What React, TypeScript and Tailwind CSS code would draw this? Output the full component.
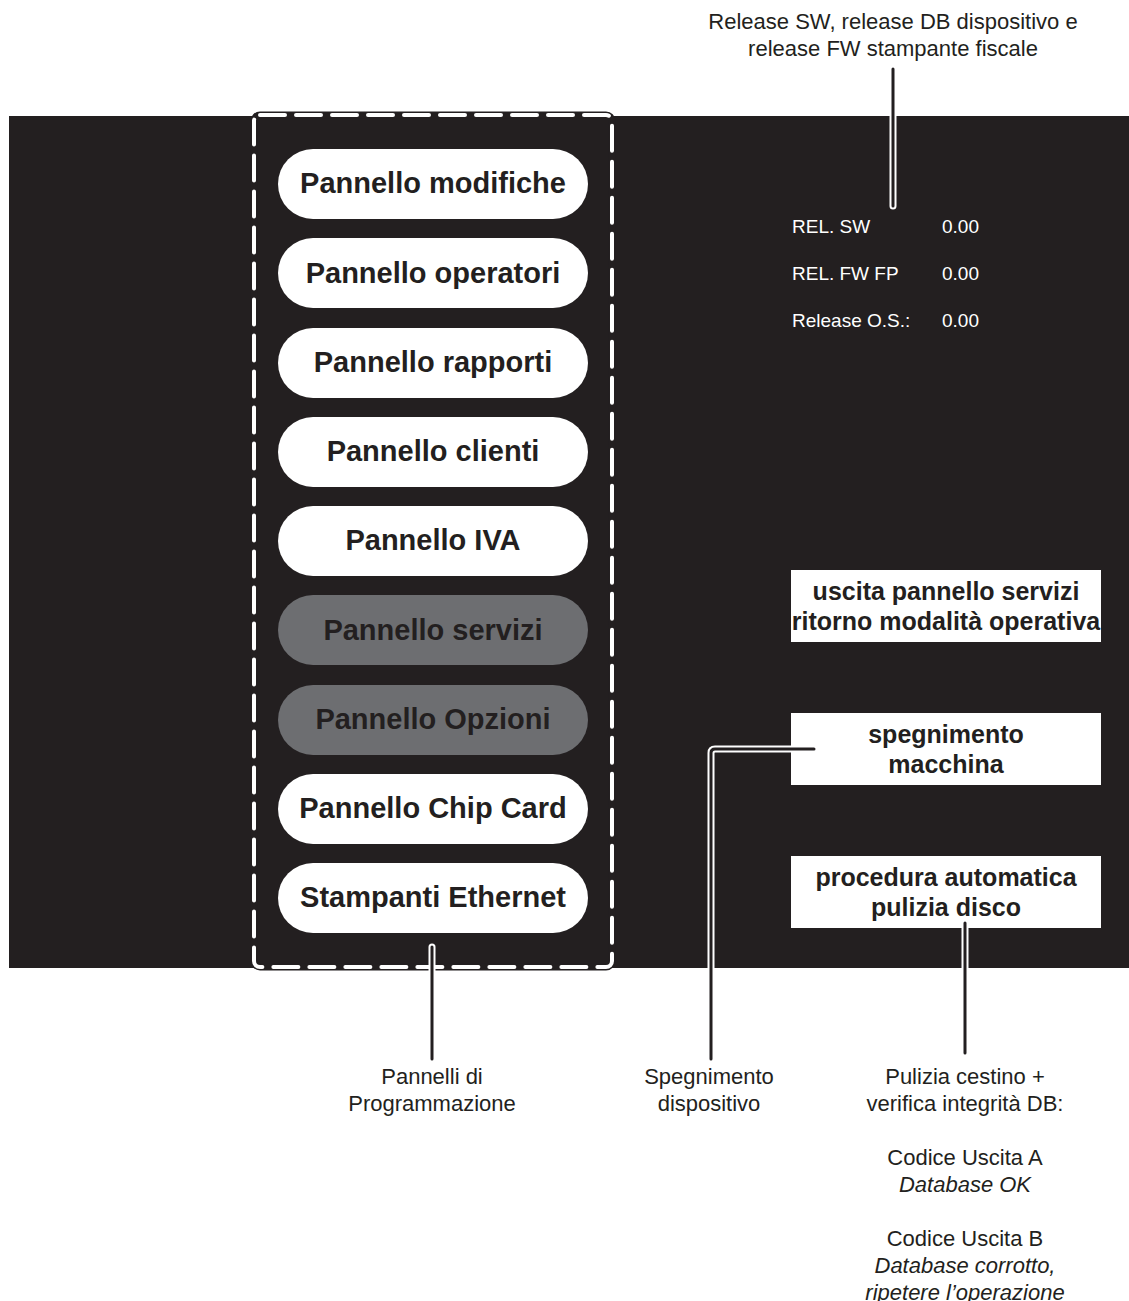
const PANELS = [
  { label: "Pannello modifiche", active: true },
  { label: "Pannello operatori", active: true },
  { label: "Pannello rapporti", active: true },
  { label: "Pannello clienti", active: true },
  { label: "Pannello IVA", active: true },
  { label: "Pannello servizi", active: false },
  { label: "Pannello Opzioni", active: false },
  { label: "Pannello Chip Card", active: true },
  { label: "Stampanti Ethernet", active: true },
]

const RELEASES = [
  { name: "REL. SW", value: "0.00" },
  { name: "REL. FW FP", value: "0.00" },
  { name: "Release O.S.:", value: "0.00" },
]

const ACTIONS = [
  ["uscita pannello servizi", "ritorno modalità operativa"],
  ["spegnimento", "macchina"],
  ["procedura automatica", "pulizia disco"],
]

// callout lines: dark core with a thin white halo
function Callout({ d }: { d: string }) {
  return (
    <g fill="none" strokeLinecap="round" strokeLinejoin="round">
      <path d={d} stroke="#ffffff" strokeWidth={7} />
      <path d={d} stroke="#231f20" strokeWidth={3} />
    </g>
  )
}

export default function App() {
  return (
    <div className="relative w-[1129px] h-[1301px] bg-white text-[#231f20] font-['Liberation_Sans',Arial,sans-serif] overflow-hidden">
      {/* top caption */}
      <div className="h-[116px] pt-[8px]">
        <div className="ml-[693px] w-[400px] text-center text-[22px] leading-[27px]">
          <p>Release SW, release DB dispositivo e</p>
          <p>release FW stampante fiscale</p>
        </div>
      </div>

      {/* device screen */}
      <div className="ml-[9px] h-[852px] bg-[#231f20] flex pl-[241px]">
        <div className="relative w-[366px] h-full">
          <svg className="absolute left-0 top-0 w-full h-full overflow-visible" viewBox="0 0 366 852">
            <rect x={4} y={-1} width={358} height={852} rx={6} fill="none" stroke="#231f20" strokeWidth={7} />
            <rect
              x={4}
              y={-1}
              width={358}
              height={852}
              rx={6}
              fill="none"
              stroke="#ffffff"
              strokeWidth={4}
              strokeDasharray="25 11"
              strokeLinecap="round"
            />
          </svg>
          <div className="relative flex flex-col items-center gap-[19.25px] pt-[33px]">
            {PANELS.map((p) => (
              <div
                key={p.label}
                className={
                  "w-[310px] h-[70px] rounded-full flex items-center justify-center text-[29px] font-bold text-[#231f20] " +
                  (p.active ? "bg-white" : "bg-[#6d6e71]")
                }
              >
                {p.label}
              </div>
            ))}
          </div>
        </div>

        <div className="ml-[175px] w-[310px] flex flex-col">
          <div className="pt-[88px]">
            {RELEASES.map((r) => (
              <div key={r.name} className="flex h-[47px] items-center text-[19px] text-white">
                <span className="w-[151px] pl-[1px]">{r.name}</span>
                <span>{r.value}</span>
              </div>
            ))}
          </div>
          <div className="mt-[225px] flex flex-col gap-[71px]">
            {ACTIONS.map((a) => (
              <div
                key={a[0]}
                className="h-[72px] bg-white flex flex-col items-center justify-center text-[25px] leading-[30px] font-bold whitespace-nowrap"
              >
                <span>{a[0]}</span>
                <span>{a[1]}</span>
              </div>
            ))}
          </div>
        </div>
      </div>

      {/* captions below */}
      <div className="flex pl-[312px] pt-[95px] text-[22px] leading-[27px] text-center">
        <div className="w-[240px]">
          <p>Pannelli di</p>
          <p>Programmazione</p>
        </div>
        <div className="ml-[57px] w-[200px]">
          <p>Spegnimento</p>
          <p>dispositivo</p>
        </div>
        <div className="ml-[26px] w-[260px]">
          <p>Pulizia cestino +</p>
          <p>verifica integrità DB:</p>
          <p className="mt-[27px]">Codice Uscita A</p>
          <p className="italic">Database OK</p>
          <p className="mt-[27px]">Codice Uscita B</p>
          <p className="italic">Database corrotto,</p>
          <p className="italic">ripetere l’operazione</p>
        </div>
      </div>

      <svg className="absolute left-0 top-0 pointer-events-none" width={1129} height={1301} viewBox="0 0 1129 1301">
        <Callout d="M893 69 V206" />
        <Callout d="M432 947 V1059" />
        <Callout d="M814 749 H715 Q711 749 711 753 V1059" />
        <Callout d="M965 923 V1053" />
      </svg>
    </div>
  )
}
